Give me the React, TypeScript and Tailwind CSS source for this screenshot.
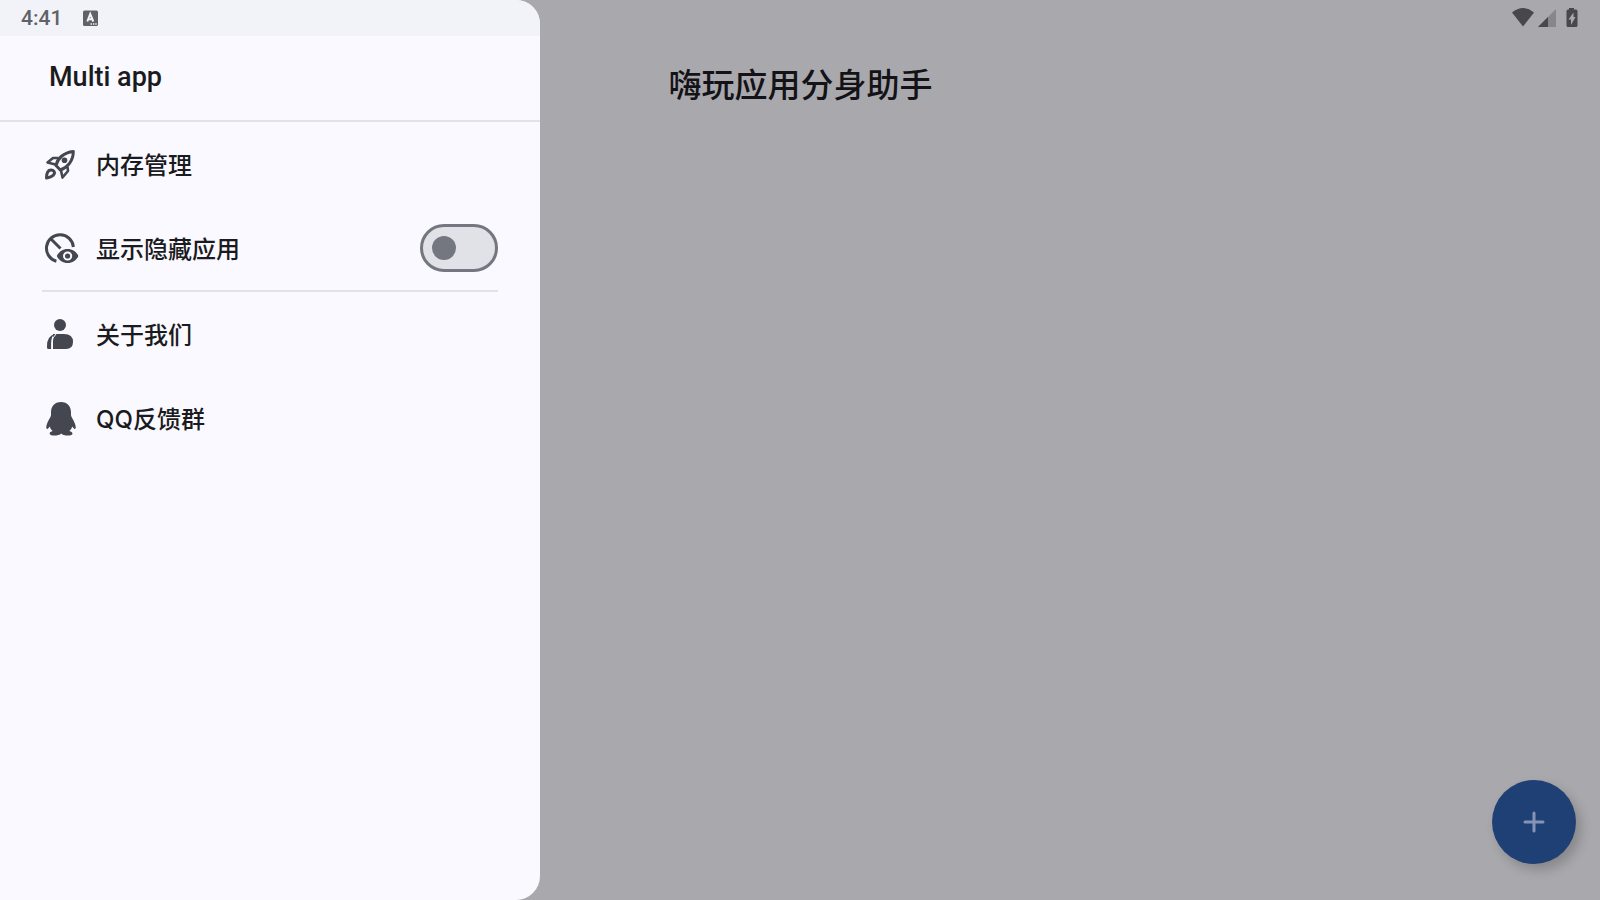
import { useState } from 'react';
import type { ReactNode } from 'react';

function RocketIcon() {
  return (
    <svg className="size-9" viewBox="0 0 36 36" fill="none" stroke="currentColor" strokeWidth="3" strokeLinejoin="round" aria-hidden="true">
      <path d="M12 19.5C13.5 12.5 19.5 6.5 29.3 5.5C29.3 15 23.5 21.5 16.3 24Z" />
      <path d="M14.5 12L9 12L3.5 16.5L11.5 18.5" strokeWidth="2.6" />
      <path d="M23.5 21L24 25L18.5 31.5L17 24.5" strokeWidth="2.6" />
      <path d="M2.5 32C2.5 27.5 4 24 7 24C9.8 24 11.3 26.2 10 28.3C9 30 6.5 31.3 2.5 32Z" />
      <circle cx="20.5" cy="14.3" r="2.8" fill="currentColor" stroke="none" />
    </svg>
  );
}

function HiddenAppsIcon() {
  return (
    <svg className="size-9" viewBox="0 0 36 36" fill="none" stroke="currentColor" strokeWidth="3" aria-hidden="true">
      <path d="M12.4 31.3A13.5 13.5 0 1 1 29.4 17" />
      <path d="M6.5 8.5L16.5 18.5" />
      <path
        d="M12.8 26C15 21.3 19 19 23.6 19C28.2 19 32.2 21.3 34.4 26C32.2 30.7 28.2 33 23.6 33C19 33 15 30.7 12.8 26Z"
        fill="currentColor"
        stroke="none"
      />
      <circle cx="23.6" cy="26" r="3.6" stroke="#faf9ff" strokeWidth="2" />
    </svg>
  );
}

function PersonIcon() {
  return (
    <svg className="size-9" viewBox="0 0 36 36" fill="currentColor" aria-hidden="true">
      <circle cx="16" cy="9" r="6" />
      <path d="M9 18H20Q29 18 29 26Q29 33 22 33H9Z" />
      <path d="M11 18Q3 20 3 30V31.5Q3 33 4.5 33H7.2V27Q7.2 20 11 18Z" />
      <path d="M8 33V27Q8 21.5 12 18" fill="none" stroke="#faf9ff" strokeWidth="1" />
    </svg>
  );
}

function PenguinIcon() {
  return (
    <svg className="size-9" viewBox="0 -1 36 36" fill="currentColor" aria-hidden="true">
      <path d="M17 1C10.5 1 7 5.5 7 11.5V14C7 15.5 6 16.5 5 18.5C2.8 22.5 1.5 26.5 2.7 27.7C3.6 28.5 5 26.5 5.8 25.5C6.2 27.5 7.2 28.7 8.7 30C6.5 30.5 5.3 31.5 5.8 33C6.5 35.1 15 35.1 17.2 32.5C19.4 35.1 27.6 35.1 28.4 33C28.8 31.5 27.5 30.5 25.3 30C26.8 28.7 27.8 27.5 28.2 25.5C29 26.5 30.4 28.5 31.3 27.7C32.5 26.5 31.2 22.5 29 18.5C28 16.5 27 15.5 27 14V11.5C27 5.5 23.5 1 17 1Z" />
    </svg>
  );
}

function MenuButton({ icon, label }: { icon: ReactNode; label: string }) {
  return (
    <button type="button" className="flex h-21 w-full items-center gap-4 pl-0.5 text-left">
      {icon}
      <span className="pt-[3px] text-[#1a1b20]">{label}</span>
    </button>
  );
}

function Drawer() {
  const [showHidden, setShowHidden] = useState(false);

  return (
    <aside className="absolute inset-y-0 left-0 w-[540px] max-w-full overflow-hidden rounded-r-3xl bg-[#faf9ff] text-[#1a1b20]">
      <div className="flex h-9 items-center gap-[18px] bg-[#f2f3f9] pl-[21px] text-[#616267]">
        <time className="pt-px text-[21px] leading-none font-medium">4:41</time>
        <svg className="size-5" viewBox="0 0 20 20" aria-hidden="true">
          <rect x="3" y="2.5" width="15" height="15.5" rx="1.5" fill="currentColor" />
          <path d="M7.3 13.5L10.2 6L13.3 13.5M8.3 11.3H12.3" fill="none" stroke="#f2f3f9" strokeWidth="2" />
          <path d="M10.5 16H17.5" stroke="#f2f3f9" strokeWidth="1.4" strokeDasharray="1.4 1" />
        </svg>
      </div>
      <h2 className="flex h-21 items-center px-[49px] pb-0.5 text-[27px] font-medium">Multi app</h2>
      <hr className="border-t-2 border-[#e2e2e8]" />
      <nav className="px-[42px] font-['Inter','Noto_Sans_CJK_SC',sans-serif] text-2xl font-medium text-[#44474f]">
        <MenuButton icon={<RocketIcon />} label="内存管理" />
        <div className="flex h-21 items-center gap-4 pl-0.5">
          <HiddenAppsIcon />
          <label htmlFor="show-hidden" className="grow pt-[3px] text-[#1a1b20]">
            显示隐藏应用
          </label>
          <input
            id="show-hidden"
            type="checkbox"
            role="switch"
            checked={showHidden}
            onChange={(e) => setShowHidden(e.target.checked)}
            className="flex h-12 w-[78px] appearance-none items-center rounded-full border-3 border-[#74777f] bg-[#e1e2e8] px-[9px] before:size-6 before:rounded-full before:bg-[#74777f] checked:justify-end"
          />
        </div>
        <hr className="border-t-2 border-[#e2e2e8]" />
        <MenuButton icon={<PersonIcon />} label="关于我们" />
        <MenuButton icon={<PenguinIcon />} label="QQ反馈群" />
      </nav>
    </aside>
  );
}

function StatusIcons() {
  return (
    <div className="flex h-9 items-center justify-end gap-1 pr-[18px] text-[#48484a]">
      <svg className="h-5 w-[22px]" viewBox="0 0 22 20" fill="currentColor" aria-hidden="true">
        <path d="M0 4.5Q11 -4.5 22 4.5L11 18.5Z" />
      </svg>
      <svg className="size-5" viewBox="0 0 20 20" fill="currentColor" aria-hidden="true">
        <path d="M18 1V19H0Z" opacity="0.35" />
        <path d="M10 9V19H0Z" />
      </svg>
      <svg className="size-5" viewBox="0 0 20 20" fill="currentColor" aria-hidden="true">
        <path d="M7 0H12V1.5H14Q15.5 1.5 15.5 3V17.5Q15.5 19 14 19H6Q4.5 19 4.5 17.5V3Q4.5 1.5 6 1.5H7Z" />
        <path d="M11.5 4.5L6.5 11.5H9V17L13.5 9H11.5Z" fill="#a9a8ac" />
      </svg>
    </div>
  );
}

export default function App() {
  return (
    <div className="relative flex h-screen flex-col bg-[#a9a8ac] font-['Roboto','Noto_Sans_CJK_SC',sans-serif]">
      <StatusIcons />
      <main className="flex grow flex-col justify-between">
        <h1 className="flex h-25 items-center justify-center pl-px text-[33px] font-medium text-[#131317]">嗨玩应用分身助手</h1>
        <div className="flex justify-end pr-6 pb-9">
          <button
            type="button"
            aria-label="添加应用"
            className="flex size-21 items-center justify-center rounded-full bg-[#1f4075] text-[#8593b4] shadow-[5px_6px_12px_rgba(0,0,0,0.2)]"
          >
            <svg className="size-6" viewBox="0 0 24 24" stroke="currentColor" strokeWidth="3" strokeLinecap="round" aria-hidden="true">
              <path d="M12 3V21M3 12H21" />
            </svg>
          </button>
        </div>
      </main>
      <Drawer />
    </div>
  );
}
